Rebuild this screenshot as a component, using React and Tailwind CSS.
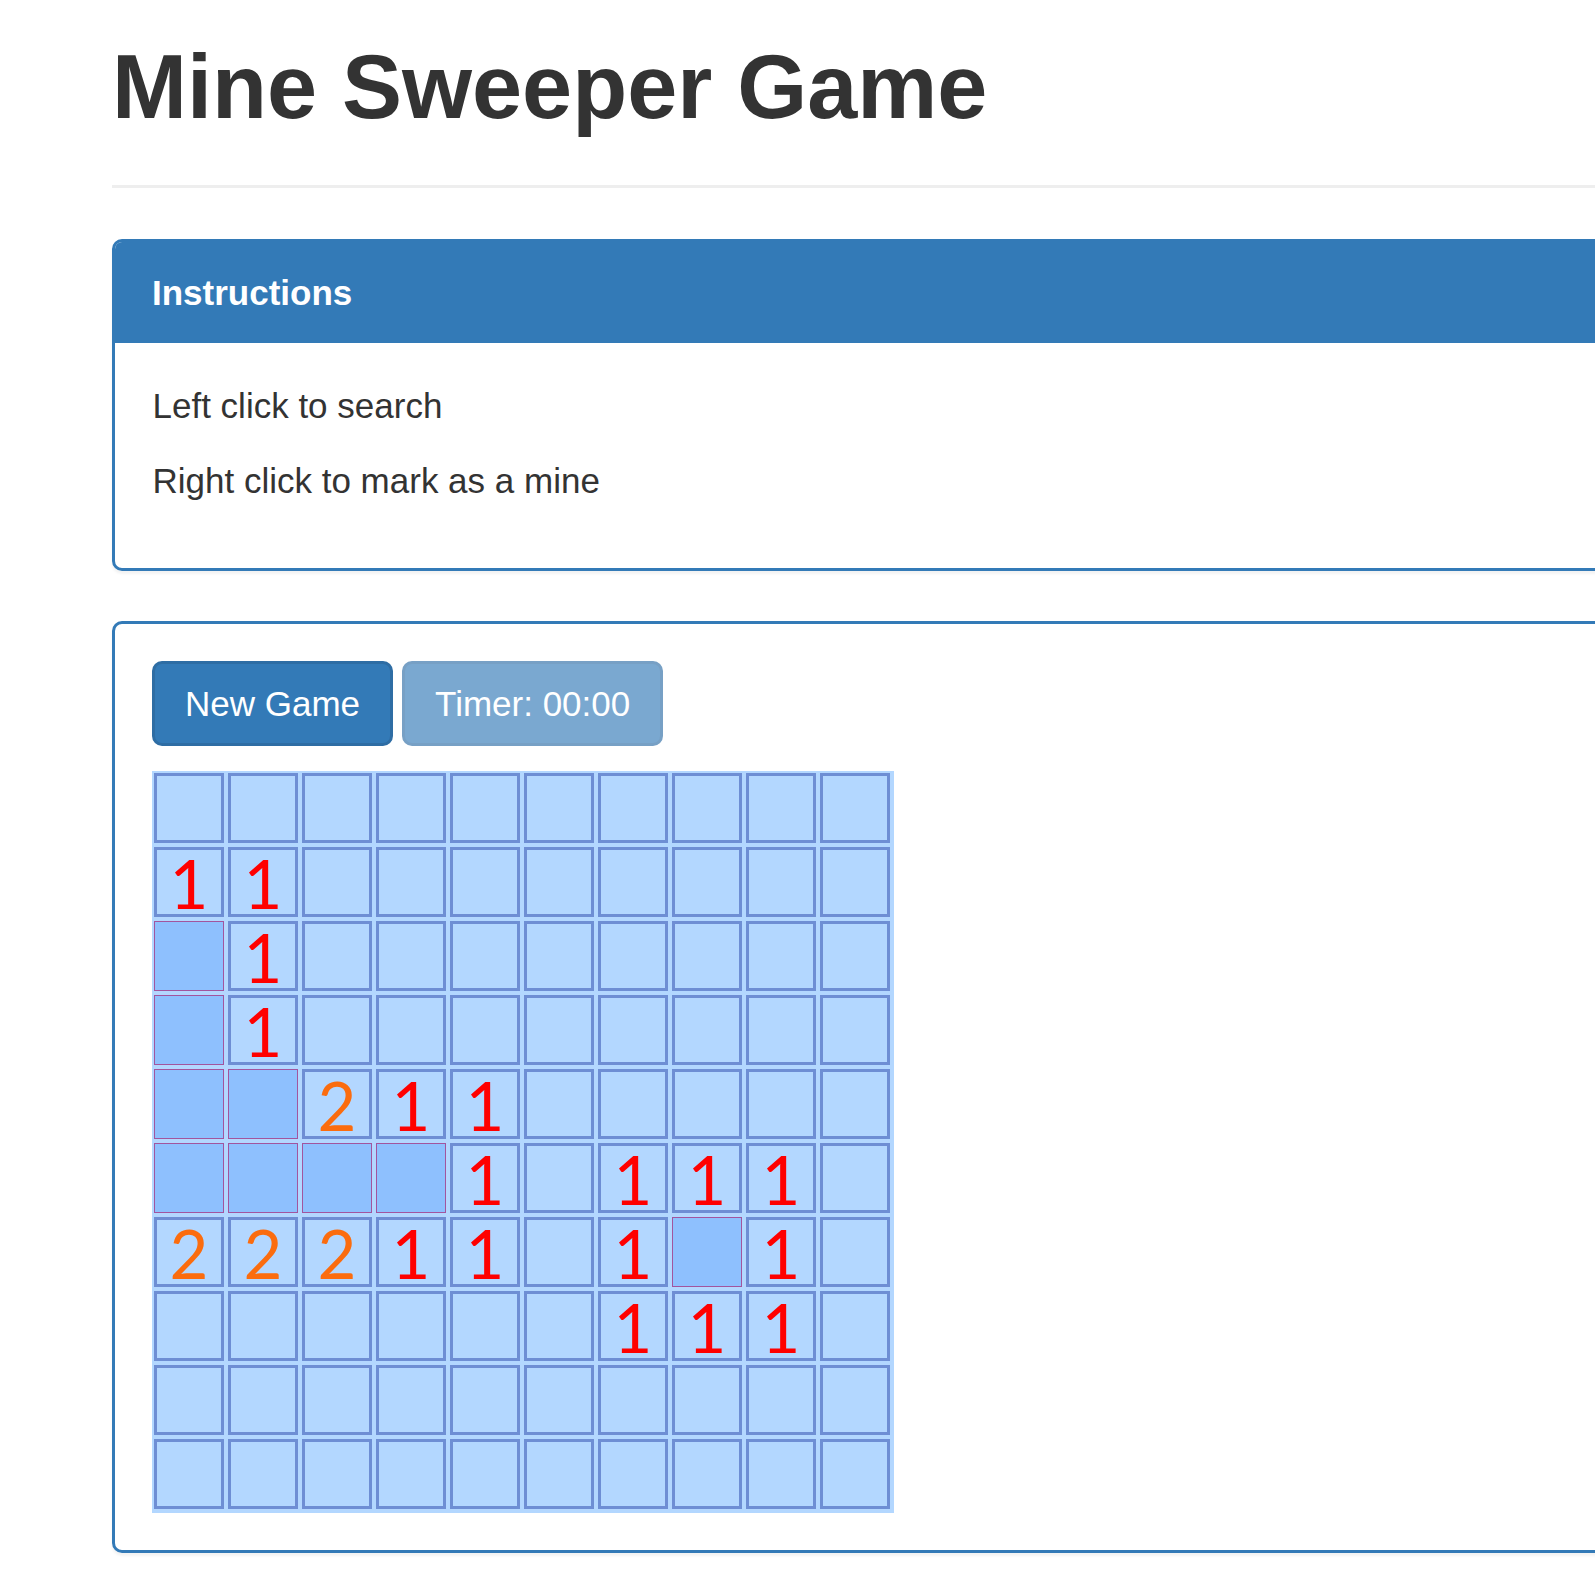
import React from 'react'

// board layout: '' = closed, 'o' = opened empty, numbers are hints
const BOARD = [
  ['', '', '', '', '', '', '', '', '', ''],
  [1, 1, '', '', '', '', '', '', '', ''],
  ['o', 1, '', '', '', '', '', '', '', ''],
  ['o', 1, '', '', '', '', '', '', '', ''],
  ['o', 'o', 2, 1, 1, '', '', '', '', ''],
  ['o', 'o', 'o', 'o', 1, '', 1, 1, 1, ''],
  [2, 2, 2, 1, 1, '', 1, 'o', 1, ''],
  ['', '', '', '', '', '', 1, 1, 1, ''],
  ['', '', '', '', '', '', '', '', '', ''],
  ['', '', '', '', '', '', '', '', '', ''],
]

function Cell({ value }) {
  if (value === 'o') {
    return (
      <div className="w-[70px] h-[70px] m-[2px] bg-[#8ec0fe] border-[1.5px] border-[#a2559e]" />
    )
  }
  const color = value === 2 ? 'text-[#fb6c0e]' : 'text-[#ff0000]'
  return (
    <div
      className={`w-[70px] h-[70px] m-[2px] bg-[#b3d7ff] border-[3px] border-[#6e8ed4] flex items-center justify-center text-[67px] leading-none ${color}`}
      style={{ fontFamily: 'Lato, "DejaVu Sans", sans-serif' }}
    >
      <span className="pt-[3px]">{value}</span>
    </div>
  )
}

export default function App() {
  return (
    <div
      className="w-[1595px] h-[1595px] overflow-hidden bg-white text-[#333]"
      style={{ fontFamily: '"Liberation Sans", Arial, sans-serif' }}
    >
      <div className="ml-[112px] w-[1700px] pt-[38px]">
        {/* page header */}
        <div className="pb-[23px] border-b-[3px] border-[#eee] mb-[51px]">
          <h1 className="text-[90px] leading-[99px] font-bold mb-[25px]">Mine Sweeper Game</h1>
        </div>

        {/* instructions panel */}
        <div className="border-[3px] border-[#337ab7] rounded-[10px] mb-[50px] shadow-[0_2.5px_2.5px_rgba(0,0,0,0.05)]">
          <div className="bg-[#337ab7] text-white font-bold text-[35px] leading-[50px] px-[37px] pt-[26px] pb-[25px] rounded-t-[7px]">
            Instructions
          </div>
          <div className="p-[37.5px] text-[35px] leading-[50px]">
            <p className="mb-[25px]">Left click to search</p>
            <p className="mb-[25px]">Right click to mark as a mine</p>
          </div>
        </div>

        {/* game panel */}
        <div className="border-[3px] border-[#337ab7] rounded-[10px] shadow-[0_2.5px_2.5px_rgba(0,0,0,0.05)]">
          <div className="px-[37px] pt-[37px] pb-[37px]">
            <div className="flex gap-[9px]">
              <button className="h-[85px] px-[30px] bg-[#337ab7] border-[3px] border-[#2e6da4] rounded-[10px] text-white text-[35px] leading-[50px]">
                New Game
              </button>
              <button className="h-[85px] px-[30px] bg-[#7aa8d0] border-[3px] border-[#77a0c5] rounded-[10px] text-white text-[35px] leading-[50px]">
                Timer: 00:00
              </button>
            </div>
            <div className="mt-[25px] w-[742px] pr-[2px] pb-[2px] bg-[#b3d7ff] flex flex-col">
              {BOARD.map((row, r) => (
                <div key={r} className="flex">
                  {row.map((v, c) => (
                    <Cell key={c} value={v} />
                  ))}
                </div>
              ))}
            </div>
          </div>
        </div>
      </div>
    </div>
  )
}
